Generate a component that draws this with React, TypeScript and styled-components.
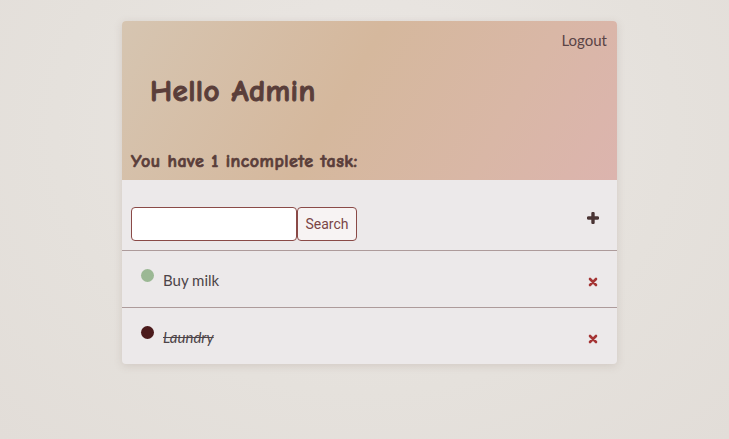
import React from "react";
import styled, { createGlobalStyle } from "styled-components";

const Global = createGlobalStyle`
  html, body { margin: 0; padding: 0; }
  body {
    min-height: 439px;
    background: radial-gradient(ellipse at 50% 30%, #ebe7e4 0%, #e5e1dc 60%, #e2ddd8 100%);
    font-family: "Lato", "Open Sans", sans-serif;
  }
`;

const Page = styled.div`
  padding: 21px 0 0 122px;
`;

const Card = styled.div`
  width: 495px;
  border-radius: 4px;
  overflow: hidden;
  box-shadow: 0 2px 8px rgba(120, 100, 90, 0.18);
  background: #ece9ea;
`;

const Header = styled.header`
  height: 159px;
  box-sizing: border-box;
  padding: 10px 10px 0 9px;
  background: linear-gradient(120deg, #d6c5b1 0%, #d5b89d 45%, #d9b7a6 75%, #dcb4ae 100%);
  color: #5a3e3a;
  display: flex;
  flex-direction: column;
`;

const TopBar = styled.div`
  display: flex;
  justify-content: flex-end;
`;

const Logout = styled.a`
  font-family: "Lato", sans-serif;
  font-size: 15px;
  color: #5a4446;
  cursor: pointer;
`;

const Title = styled.h1`
  margin: 24px 0 0 19px;
  font-family: "Comic Sans MS", "Comic Neue", cursive;
  font-size: 31px;
  font-weight: 700;
  line-height: 36px;
  letter-spacing: 0.4px;
  -webkit-text-stroke: 1px #5a3e3a;
`;

const Subtitle = styled.h2`
  margin: 42px 0 0 0;
  font-family: "Comic Sans MS", "Comic Neue", cursive;
  font-size: 18px;
  font-weight: 700;
  line-height: 22px;
  letter-spacing: 0.5px;
  -webkit-text-stroke: 0.7px #5a3e3a;
`;

const SearchRow = styled.div`
  height: 71px;
  box-sizing: border-box;
  padding: 27px 18px 0 9px;
  display: flex;
  align-items: flex-start;
  border-bottom: 1px solid #ad9b9b;
`;

const Input = styled.input`
  width: 166px;
  height: 34px;
  box-sizing: border-box;
  border: 1px solid #8a4a47;
  border-radius: 4px;
  background: #fff;
  outline: none;
`;

const SearchButton = styled.button`
  height: 34px;
  width: 60px;
  box-sizing: border-box;
  padding: 0;
  border: 1px solid #8a4a47;
  border-radius: 4px;
  background: #f7f3f3;
  color: #7a4546;
  font-family: "Roboto", "Liberation Sans", sans-serif;
  font-size: 14px;
`;

const Spacer = styled.div`
  flex: 1;
`;

const IconButton = styled.span<{ $color: string; $top: number }>`
  display: flex;
  margin-top: ${(p) => p.$top}px;
  color: ${(p) => p.$color};
`;

const Item = styled.div<{ $last?: boolean }>`
  height: ${(p) => (p.$last ? 56 : 57)}px;
  box-sizing: border-box;
  display: flex;
  align-items: flex-start;
  padding: 18px 19px 0 19px;
  border-bottom: ${(p) => (p.$last ? "none" : "1px solid #ad9b9b")};
`;

const Dot = styled.span<{ $color: string }>`
  width: 13px;
  height: 13px;
  border-radius: 50%;
  background: ${(p) => p.$color};
`;

const ItemText = styled.span<{ $done?: boolean }>`
  margin-left: 9px;
  margin-top: 2px;
  font-family: "Lato", sans-serif;
  font-size: 15px;
  color: #4c4448;
  font-style: ${(p) => (p.$done ? "italic" : "normal")};
  text-decoration: ${(p) => (p.$done ? "line-through" : "none")};
`;

const Plus = () => (
  <svg width="12" height="12" viewBox="0 0 12 12">
    <path d="M6 1.5v9M1.5 6h9" stroke="currentColor" strokeWidth="3.4" strokeLinecap="round" />
  </svg>
);

const Cross = () => (
  <svg width="10" height="10" viewBox="0 0 10 10">
    <path d="M2 2l6 6M8 2l-6 6" stroke="currentColor" strokeWidth="2.6" strokeLinecap="round" />
  </svg>
);

const tasks = [
  { name: "Buy milk", done: false, color: "#9bb894" },
  { name: "Laundry", done: true, color: "#4b1a1b" },
];

export default function App() {
  return (
    <>
      <Global />
      <Page>
        <Card>
          <Header>
            <TopBar>
              <Logout>Logout</Logout>
            </TopBar>
            <Title>Hello Admin</Title>
            <Subtitle>You have 1 incomplete task:</Subtitle>
          </Header>
          <SearchRow>
            <Input type="text" />
            <SearchButton>Search</SearchButton>
            <Spacer />
            <IconButton $color="#4a3434" $top={5}>
              <Plus />
            </IconButton>
          </SearchRow>
          {tasks.map((t, i) => (
            <Item key={t.name} $last={i === tasks.length - 1}>
              <Dot $color={t.color} />
              <ItemText $done={t.done}>{t.name}</ItemText>
              <Spacer />
              <IconButton $color="#a53535" $top={8}>
                <Cross />
              </IconButton>
            </Item>
          ))}
        </Card>
      </Page>
    </>
  );
}
